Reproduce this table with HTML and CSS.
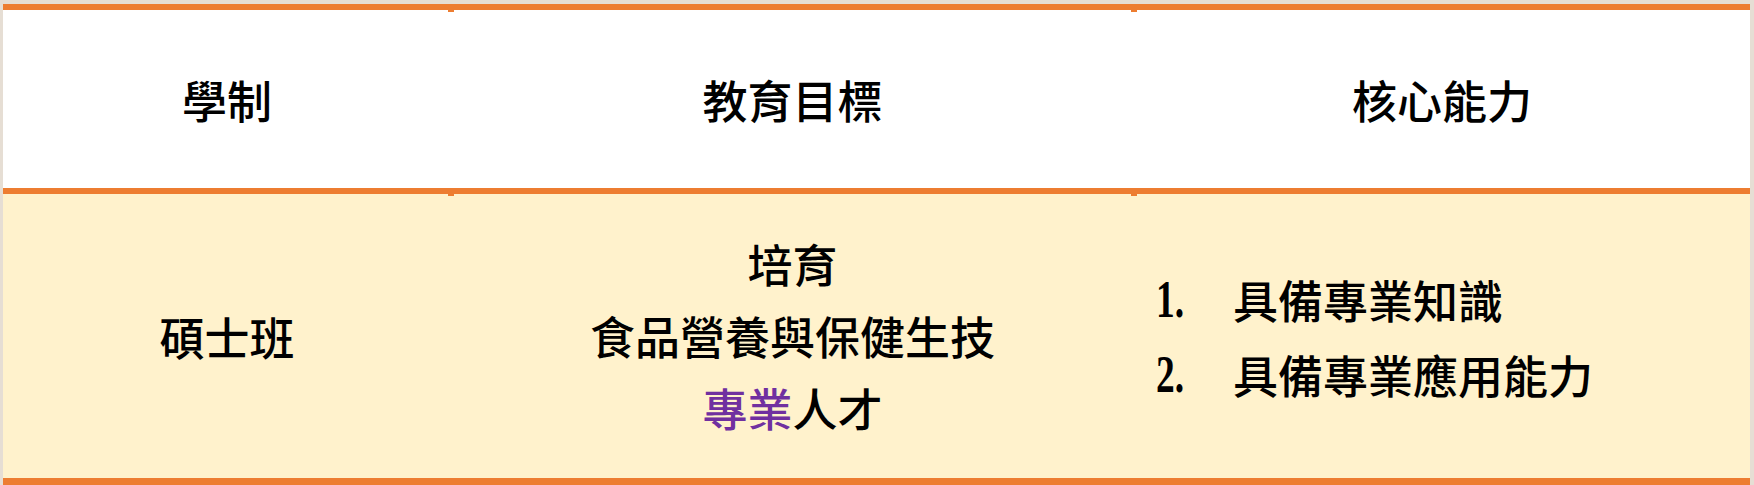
FILE: index.html
```html
<!DOCTYPE html>
<html lang="zh-Hant">
<head>
<meta charset="utf-8">
<title>學制</title>
<link rel="stylesheet" href="styles.css">
</head>
<body>
<div class="table">
  <div class="row head">
    <div class="cell">學制</div>
    <div class="cell">教育目標</div>
    <div class="cell">核心能力</div>
  </div>
  <div class="row body-row">
    <div class="cell">碩士班</div>
    <div class="cell goal">
      <div class="line">培育</div>
      <div class="line">食品營養與保健生技</div>
      <div class="line"><span class="accent">專業</span>人才</div>
    </div>
    <div class="cell abilities">
      <div class="item"><span class="num">1.</span><span>具備專業知識</span></div>
      <div class="item"><span class="num">2.</span><span>具備專業應用能力</span></div>
    </div>
  </div>
</div>
</body>
</html>
```

FILE: styles.css
```css
html, body {
  margin: 0;
  padding: 0;
}
body {
  width: 1754px;
  height: 485px;
  overflow: hidden;
  background: #e6ded4;
  font-family: "Noto Sans CJK TC", "Noto Sans CJK SC", sans-serif;
  font-weight: 500;
  color: #000;
}
.table {
  margin: 4px 0 0 3px;
  width: 1747px;
}
.row {
  display: grid;
  grid-template-columns: 448px 683px 616px;
}
.head {
  background: #ffffff;
  border-top: 6px solid #ed7d31;
  border-bottom: 6px solid #ed7d31;
  height: 178px;
}
.body-row {
  background: #fff2cc;
  height: 284px;
  border-bottom: 7px solid #ed7d31;
}
.cell {
  position: relative;
  display: flex;
  flex-direction: column;
  align-items: center;
  justify-content: center;
  font-size: 45px;
  line-height: 1;
}
.cell + .cell::before {
  content: "";
  position: absolute;
  left: -3px;
  top: 0;
  width: 6px;
  height: 2px;
  background: #ed7d31;
}
.goal .line {
  line-height: 72px;
  text-align: center;
}
.accent {
  color: #7030a0;
}
.abilities {
  align-items: flex-start;
  padding-left: 22px;
  padding-top: 2px;
}
.item {
  display: flex;
  line-height: 75px;
}
.num {
  width: 77px;
  font-family: "Liberation Serif", serif;
  font-weight: 700;
  font-size: 52px;
  transform: scaleX(0.72);
  transform-origin: left center;
}
```
